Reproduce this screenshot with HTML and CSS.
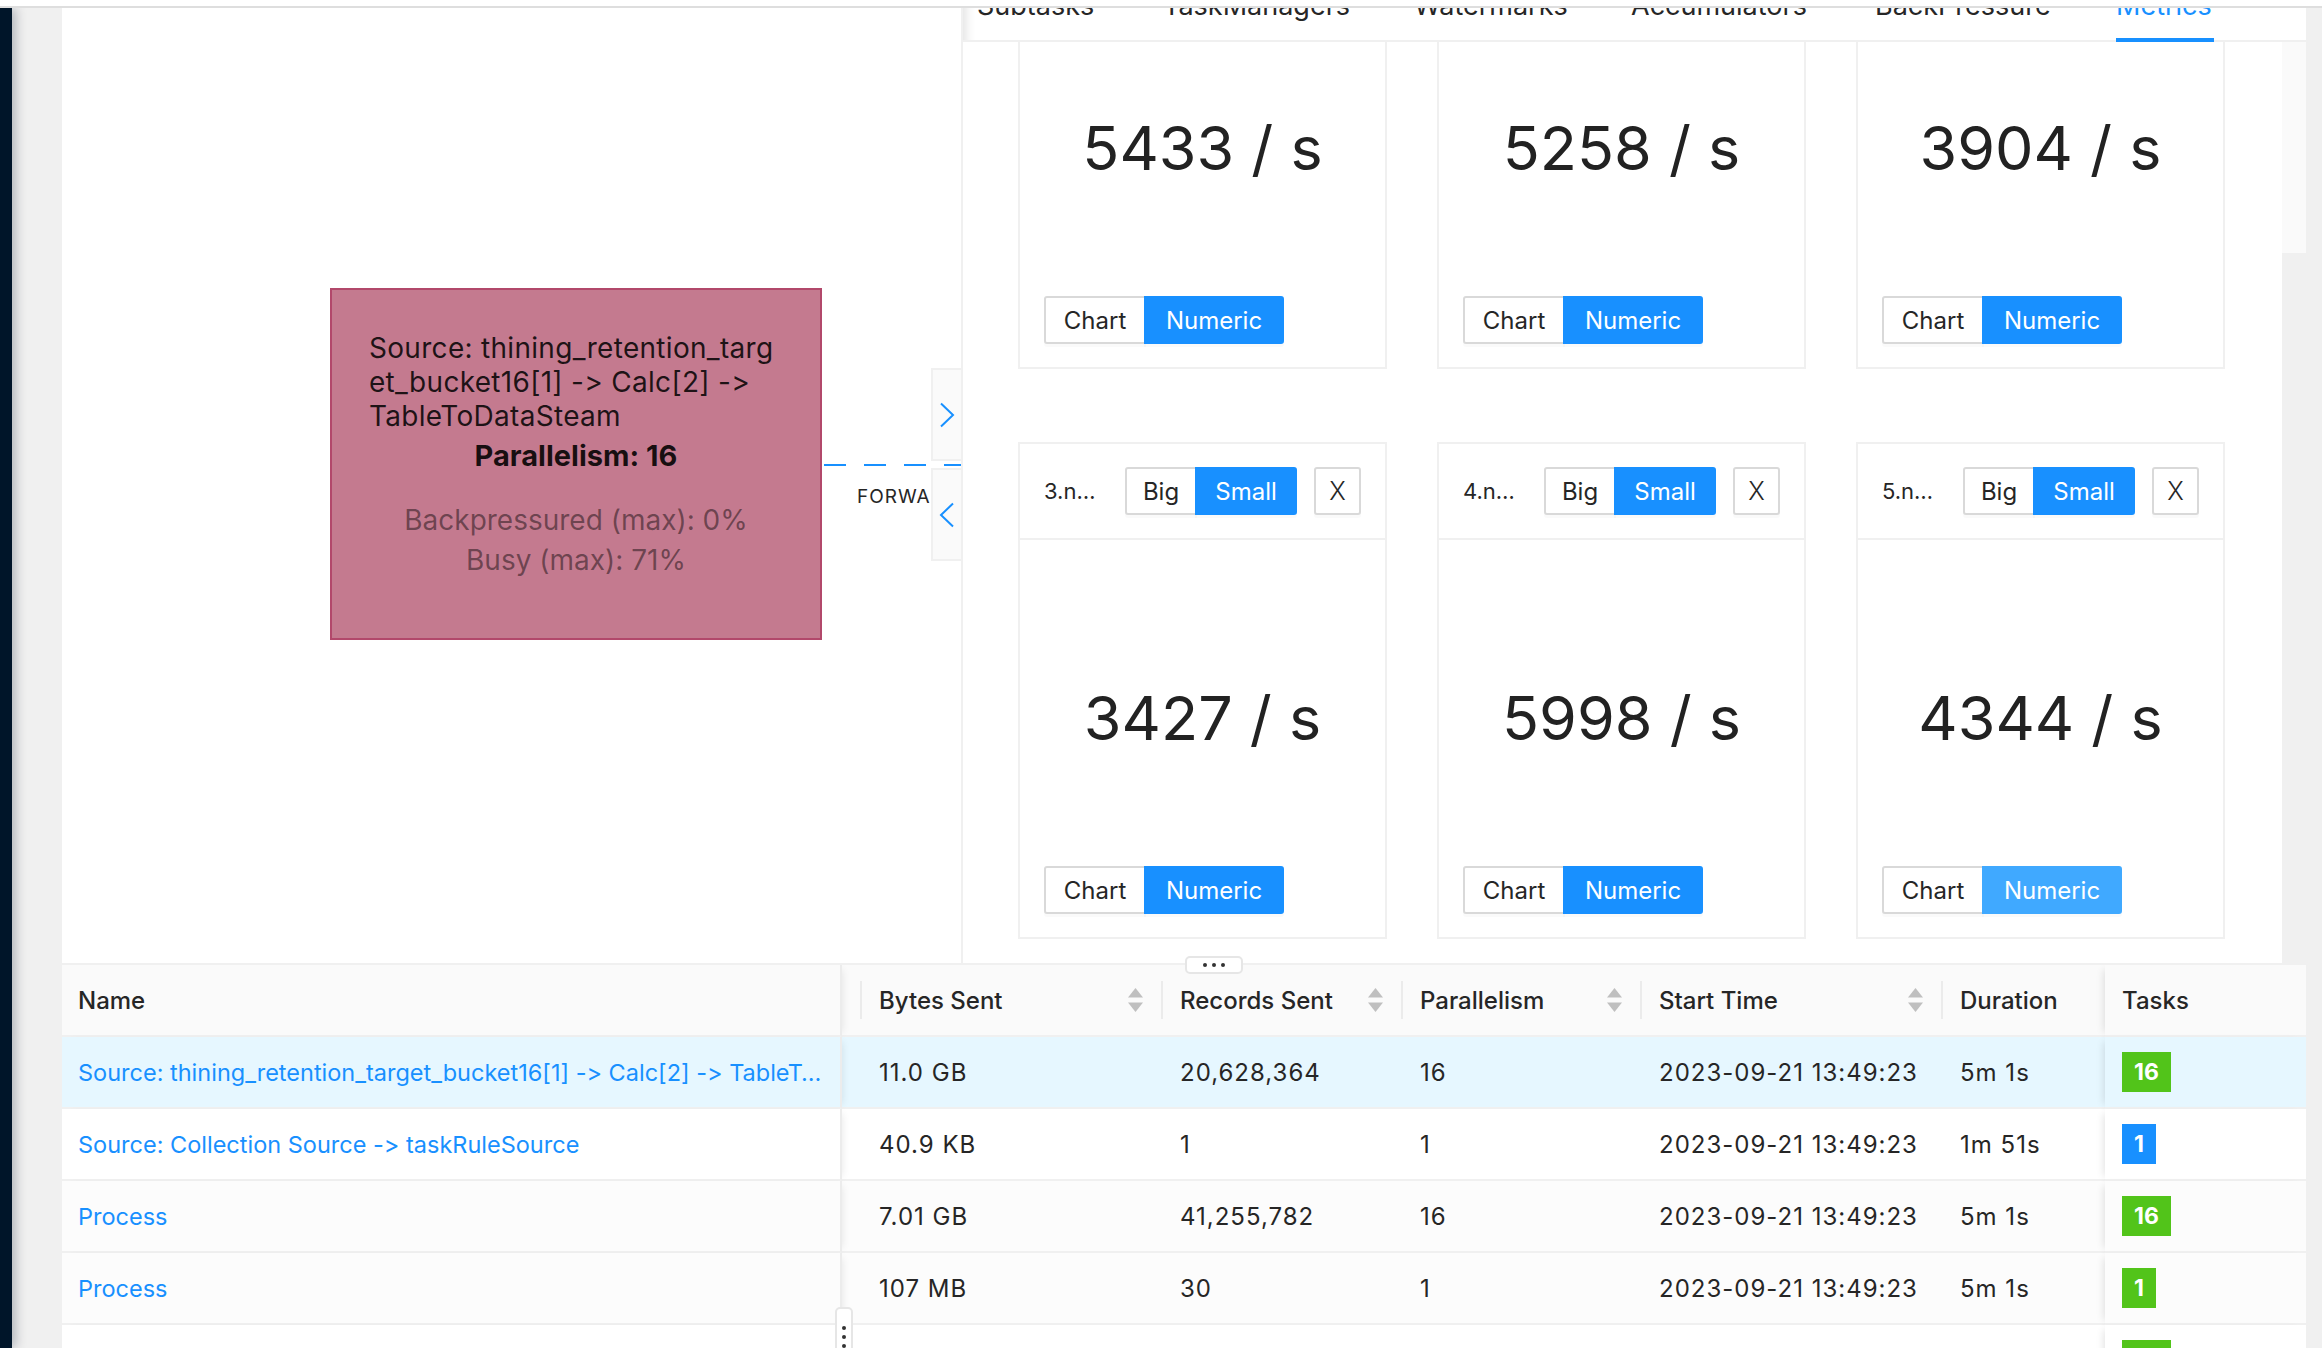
FILE: index.html
```html
<!DOCTYPE html>
<html>
<head>
<meta charset="utf-8">
<title>Job Graph</title>
<link rel="stylesheet" href="styles.css">
</head>
<body>
<div class="topbar"></div>
<div class="app">
  <div class="sider"></div>
  <div class="layout">
    <div class="upper">
      <div class="graph">
        <div class="node">
          <div class="node-title">
            <div>Source: thining_retention_targ</div>
            <div>et_bucket16[1] -&gt; Calc[2] -&gt;</div>
            <div>TableToDataSteam</div>
          </div>
          <div class="node-par">Parallelism: 16</div>
          <div class="node-stat">
            <div>Backpressured (max): 0%</div>
            <div>Busy (max): 71%</div>
          </div>
        </div>
        <div class="edge"></div>
        <div class="edge-label">FORWARD</div>
        <div class="toggles">
          <div class="toggle"><svg width="16" height="26" viewBox="0 0 16 26"><path d="M2 1.5 L14 13 L2 24.5" fill="none" stroke="#1890ff" stroke-width="2"/></svg></div>
          <div class="toggle"><svg width="16" height="26" viewBox="0 0 16 26"><path d="M14 1.5 L2 13 L14 24.5" fill="none" stroke="#1890ff" stroke-width="2"/></svg></div>
        </div>
      </div>
      <div class="panel">
        <div class="tabs">
          <div class="tab t1">Subtasks</div>
          <div class="tab t2">TaskManagers</div>
          <div class="tab t3">Watermarks</div>
          <div class="tab t4">Accumulators</div>
          <div class="tab t5">BackPressure</div>
          <div class="tab t6 active">Metrics</div>
        </div>
        <div class="panel-body">
          <div class="scroll">
            <div class="cards">
              <div class="card">
                <div class="card-head"><div class="card-title">0.n…</div><div class="seg"><div class="btn w-big">Big</div><div class="btn w-small primary">Small</div></div><div class="btn w-x">X</div></div>
                <div class="card-body"><div class="num">5433 / s</div><div class="seg seg-bottom"><div class="btn w-chart">Chart</div><div class="btn w-numeric primary">Numeric</div></div></div>
              </div>
              <div class="card">
                <div class="card-head"><div class="card-title">1.n…</div><div class="seg"><div class="btn w-big">Big</div><div class="btn w-small primary">Small</div></div><div class="btn w-x">X</div></div>
                <div class="card-body"><div class="num">5258 / s</div><div class="seg seg-bottom"><div class="btn w-chart">Chart</div><div class="btn w-numeric primary">Numeric</div></div></div>
              </div>
              <div class="card">
                <div class="card-head"><div class="card-title">2.n…</div><div class="seg"><div class="btn w-big">Big</div><div class="btn w-small primary">Small</div></div><div class="btn w-x">X</div></div>
                <div class="card-body"><div class="num">3904 / s</div><div class="seg seg-bottom"><div class="btn w-chart">Chart</div><div class="btn w-numeric primary">Numeric</div></div></div>
              </div>
              <div class="card">
                <div class="card-head"><div class="card-title">3.n…</div><div class="seg"><div class="btn w-big">Big</div><div class="btn w-small primary">Small</div></div><div class="btn w-x">X</div></div>
                <div class="card-body"><div class="num">3427 / s</div><div class="seg seg-bottom"><div class="btn w-chart">Chart</div><div class="btn w-numeric primary">Numeric</div></div></div>
              </div>
              <div class="card">
                <div class="card-head"><div class="card-title">4.n…</div><div class="seg"><div class="btn w-big">Big</div><div class="btn w-small primary">Small</div></div><div class="btn w-x">X</div></div>
                <div class="card-body"><div class="num">5998 / s</div><div class="seg seg-bottom"><div class="btn w-chart">Chart</div><div class="btn w-numeric primary">Numeric</div></div></div>
              </div>
              <div class="card">
                <div class="card-head"><div class="card-title">5.n…</div><div class="seg"><div class="btn w-big">Big</div><div class="btn w-small primary">Small</div></div><div class="btn w-x">X</div></div>
                <div class="card-body"><div class="num">4344 / s</div><div class="seg seg-bottom"><div class="btn w-chart">Chart</div><div class="btn w-numeric primary hover">Numeric</div></div></div>
              </div>
            </div>
          </div>
          <div class="scrollbar"><div class="thumb"></div></div>
        </div>
      </div>
    </div>
    <div class="table-area">
      <table class="grid">
        <colgroup>
          <col class="c-name"><col class="c-gap"><col class="c-bytes"><col class="c-records"><col class="c-par"><col class="c-start"><col class="c-dur"><col class="c-tasks">
        </colgroup>
        <thead>
          <tr>
            <th class="name">Name</th>
            <th class="gap sep"></th>
            <th class="sep"><div class="th-in"><span>Bytes Sent</span><svg class="sorter" width="15" height="24" viewBox="0 0 15 24"><path d="M7.5 0 L15 9.5 H0 Z" fill="#bfbfbf"/><path d="M0 14.5 H15 L7.5 24 Z" fill="#bfbfbf"/></svg></div></th>
            <th class="sep"><div class="th-in"><span>Records Sent</span><svg class="sorter" width="15" height="24" viewBox="0 0 15 24"><path d="M7.5 0 L15 9.5 H0 Z" fill="#bfbfbf"/><path d="M0 14.5 H15 L7.5 24 Z" fill="#bfbfbf"/></svg></div></th>
            <th class="sep"><div class="th-in"><span>Parallelism</span><svg class="sorter" width="15" height="24" viewBox="0 0 15 24"><path d="M7.5 0 L15 9.5 H0 Z" fill="#bfbfbf"/><path d="M0 14.5 H15 L7.5 24 Z" fill="#bfbfbf"/></svg></div></th>
            <th class="sep"><div class="th-in"><span>Start Time</span><svg class="sorter" width="15" height="24" viewBox="0 0 15 24"><path d="M7.5 0 L15 9.5 H0 Z" fill="#bfbfbf"/><path d="M0 14.5 H15 L7.5 24 Z" fill="#bfbfbf"/></svg></div></th>
            <th>Duration</th>
            <th class="tasks">Tasks</th>
          </tr>
        </thead>
        <tbody>
          <tr class="sel">
            <td class="name"><a class="link">Source: thining_retention_target_bucket16[1] -&gt; Calc[2] -&gt; TableT…</a></td>
            <td class="gap"></td>
            <td class="val">11.0 GB</td><td class="val">20,628,364</td><td class="val">16</td><td class="val">2023-09-21 13:49:23</td><td class="val">5m 1s</td>
            <td class="tasks"><span class="badge">16</span></td>
          </tr>
          <tr>
            <td class="name"><a class="link">Source: Collection Source -&gt; taskRuleSource</a></td>
            <td class="gap"></td>
            <td class="val">40.9 KB</td><td class="val">1</td><td class="val">1</td><td class="val">2023-09-21 13:49:23</td><td class="val">1m 51s</td>
            <td class="tasks"><span class="badge blue">1</span></td>
          </tr>
          <tr class="alt">
            <td class="name"><a class="link">Process</a></td>
            <td class="gap"></td>
            <td class="val">7.01 GB</td><td class="val">41,255,782</td><td class="val">16</td><td class="val">2023-09-21 13:49:23</td><td class="val">5m 1s</td>
            <td class="tasks"><span class="badge">16</span></td>
          </tr>
          <tr class="alt">
            <td class="name"><a class="link">Process</a></td>
            <td class="gap"></td>
            <td class="val">107 MB</td><td class="val">30</td><td class="val">1</td><td class="val">2023-09-21 13:49:23</td><td class="val">5m 1s</td>
            <td class="tasks"><span class="badge">1</span></td>
          </tr>
          <tr>
            <td class="name"><a class="link">Sink: Print to Std. Out</a></td>
            <td class="gap"></td>
            <td class="val">0 B</td><td class="val">0</td><td class="val">16</td><td class="val">2023-09-21 13:49:23</td><td class="val">5m 1s</td>
            <td class="tasks"><span class="badge">16</span></td>
          </tr>
        </tbody>
      </table>
    </div>
  </div>
</div>
<div class="split-h"><span class="dot"></span><span class="dot"></span><span class="dot"></span></div>
<div class="split-v"><span class="dot"></span><span class="dot"></span><span class="dot"></span></div>
</body>
</html>
```

FILE: styles.css
```css
* { box-sizing: border-box; }
html, body { margin: 0; padding: 0; }
body {
  width: 2322px;
  height: 1348px;
  overflow: hidden;
  position: relative;
  background: #f0f0f0;
  font-family: Inter, "Noto Sans", sans-serif;
  font-variant-ligatures: none;
  font-feature-settings: "calt" 0, "liga" 0;
  color: #262626;
}
.topbar {
  height: 8px;
  background: #fff;
  border-bottom: 2px solid #dedede;
  position: relative;
  z-index: 10;
}
.app { display: flex; height: 1340px; }
.sider {
  width: 12px;
  flex: none;
  background: #001529;
  box-shadow: 3px 0 12px rgba(0, 21, 41, 0.3);
  position: relative;
  z-index: 3;
}
.layout {
  margin-left: 50px;
  width: 2244px;
  display: flex;
  flex-direction: column;
}
.upper {
  height: 957px;
  flex: none;
  display: flex;
  border-bottom: 2px solid #f0f0f0;
  background: #fff;
}

/* graph */
.graph {
  width: 899px;
  flex: none;
  position: relative;
  overflow: hidden;
  background: #fff;
}
.node {
  position: absolute;
  left: 268px;
  top: 280px;
  width: 492px;
  height: 352px;
  background: #c47a8f;
  border: 2px solid #b2486b;
  padding: 41px 37px 0;
}
.node-title {
  font-size: 28px;
  line-height: 34px;
  letter-spacing: 0.3px;
  white-space: nowrap;
  color: rgba(0, 0, 0, 0.85);
}
.node-par {
  margin-top: 6px;
  font-size: 29px;
  line-height: 34px;
  font-weight: 700;
  text-align: center;
  color: rgba(0, 0, 0, 0.88);
  white-space: nowrap;
}
.node-stat {
  margin-top: 27px;
  font-size: 28px;
  line-height: 40px;
  text-align: center;
  color: rgba(0, 0, 0, 0.45);
  white-space: nowrap;
}
.edge {
  position: absolute;
  left: 762px;
  top: 456px;
  width: 137px;
  height: 2px;
  background: repeating-linear-gradient(to right, #1890ff 0 22px, transparent 22px 40px);
}
.edge-label {
  position: absolute;
  left: 795px;
  top: 478px;
  font-size: 19px;
  line-height: 22px;
  letter-spacing: 1px;
  color: #262626;
}
.toggles {
  position: absolute;
  right: 0;
  top: 360px;
  display: flex;
  flex-direction: column;
  gap: 7px;
}
.toggle {
  width: 30px;
  height: 93px;
  background: #fafafa;
  border: 2px solid #f0f0f0;
  border-right: none;
  display: flex;
  align-items: center;
  justify-content: center;
}

/* panel */
.panel {
  flex: 1;
  min-width: 0;
  border-left: 2px solid #f0f0f0;
  display: flex;
  flex-direction: column;
  background: #fff;
}
.tabs {
  margin-top: -30px;
  height: 64px;
  flex: none;
  display: flex;
  padding-left: 14px;
  border-bottom: 2px solid #f0f0f0;
  background: #fff;
  box-shadow: inset 14px 0 10px -10px rgba(0, 0, 0, 0.1);
}
.tab {
  position: relative;
  font-size: 27px;
  line-height: 30px;
  padding-top: 13px;
  white-space: nowrap;
  color: #262626;
  flex: none;
}
.t1 { width: 186px; }
.t2 { width: 251px; }
.t3 { width: 217px; }
.t4 { width: 244px; }
.t5 { width: 241px; }
.t6 { width: 98px; }
.tab.active { color: #1890ff; }
.tab.active::after {
  content: "";
  position: absolute;
  left: 0;
  right: 0;
  bottom: -2px;
  height: 4px;
  background: #1890ff;
}
.panel-body {
  flex: 1;
  min-height: 0;
  display: flex;
  overflow: hidden;
}
.scroll { flex: 1; overflow: hidden; }
.scrollbar { width: 24px; flex: none; background: #f0f0f0; }
.thumb { height: 211px; background: #fafafa; }
.cards {
  display: grid;
  grid-template-columns: repeat(3, 369px);
  column-gap: 50px;
  row-gap: 73px;
  padding-left: 55px;
  margin-top: -170px;
}
.card {
  height: 497px;
  border: 2px solid #f0f0f0;
  background: #fff;
  display: flex;
  flex-direction: column;
}
.card-head {
  height: 96px;
  flex: none;
  border-bottom: 2px solid #f0f0f0;
  display: flex;
  align-items: center;
  padding: 0 24px;
}
.card-title {
  flex: 1;
  min-width: 0;
  font-size: 22px;
  white-space: nowrap;
  overflow: hidden;
  color: #262626;
}
.card-body {
  flex: 1;
  padding: 130px 24px 0;
  display: flex;
  flex-direction: column;
}
.num {
  height: 96px;
  line-height: 96px;
  text-align: center;
  font-size: 61px;
  color: #222;
  white-space: nowrap;
}
.seg { display: flex; flex: none; }
.seg-bottom { margin-top: 100px; }
.btn {
  height: 48px;
  border: 2px solid #d9d9d9;
  background: #fff;
  font-size: 24px;
  color: #262626;
  display: flex;
  align-items: center;
  justify-content: center;
  box-shadow: 0 3px 0 rgba(0, 0, 0, 0.02);
  flex: none;
}
.seg .btn:first-child { border-radius: 3px 0 0 3px; }
.seg .btn:last-child { border-radius: 0 3px 3px 0; margin-left: -2px; }
.btn.primary {
  background: #1890ff;
  border-color: #1890ff;
  color: #fff;
  position: relative;
}
.btn.primary.hover { background: #40a9ff; border-color: #40a9ff; }
.w-big { width: 72px; }
.w-small { width: 102px; }
.w-x { width: 47px; margin-left: 17px; border-radius: 3px; font-size: 25px; font-weight: 300; }
.w-chart { width: 102px; }
.w-numeric { width: 140px; }

/* table */
.table-area {
  flex: 1;
  min-height: 0;
  background: #fff;
  overflow: hidden;
}
.grid {
  border-collapse: separate;
  border-spacing: 0;
  table-layout: fixed;
  width: 2244px;
  font-size: 24px;
}
.c-name { width: 780px; }
.c-gap { width: 20px; }
.c-bytes { width: 301px; }
.c-records { width: 240px; }
.c-par { width: 239px; }
.c-start { width: 301px; }
.c-dur { width: 162px; }
.c-tasks { width: 201px; }
.grid th, .grid td {
  height: 72px;
  padding: 0 17px;
  border-bottom: 2px solid #f0f0f0;
  text-align: left;
  white-space: nowrap;
  overflow: hidden;
  color: #262626;
  background: #fff;
}
.grid td.val { letter-spacing: 1px; }
.grid th {
  background: #fafafa;
  font-weight: 500;
  position: relative;
}
.grid th.gap, .grid td.gap { padding: 0; }
.grid th.sep::before {
  content: "";
  position: absolute;
  right: 0;
  top: 50%;
  width: 2px;
  height: 38px;
  margin-top: -19px;
  background: #ebebeb;
}
.th-in {
  display: flex;
  align-items: center;
  justify-content: space-between;
  padding-right: 3px;
}
.sorter { flex: none; display: block; }
.grid .name {
  padding-left: 16px;
  border-right: 2px solid #ececec;
  position: relative;
  z-index: 1;
  box-shadow: 5px 0 8px -5px rgba(0, 0, 0, 0.1);
}
.grid td.name { font-size: 23.5px; }
.grid .tasks {
  position: relative;
  z-index: 1;
  box-shadow: -6px 0 8px -5px rgba(0, 0, 0, 0.12);
}
.grid tr.sel td { background: #e6f7ff; }
.grid tr.alt td { background: #fcfcfc; }
.link {
  display: block;
  overflow: hidden;
  text-overflow: ellipsis;
  white-space: nowrap;
  color: #1890ff;
  text-decoration: none;
}
.badge {
  display: inline-block;
  height: 40px;
  line-height: 40px;
  padding: 0 12px;
  background: #52c41a;
  color: #fff;
  font-weight: 700;
  font-size: 23px;
  vertical-align: middle;
}
.badge.blue { background: #1890ff; }

/* split handles */
.split-h {
  position: absolute;
  left: 1185px;
  top: 956px;
  width: 58px;
  height: 18px;
  background: #fff;
  border: 2px solid #e6e6e6;
  border-radius: 5px;
  display: flex;
  align-items: center;
  justify-content: center;
  gap: 5px;
  z-index: 5;
}
.split-v {
  position: absolute;
  left: 835px;
  top: 1307px;
  width: 18px;
  height: 60px;
  background: #fff;
  border: 2px solid #e6e6e6;
  border-radius: 5px;
  display: flex;
  flex-direction: column;
  align-items: center;
  padding-top: 17px;
  gap: 5px;
  z-index: 5;
}
.dot {
  width: 4px;
  height: 4px;
  border-radius: 50%;
  background: #333;
  flex: none;
}
```
